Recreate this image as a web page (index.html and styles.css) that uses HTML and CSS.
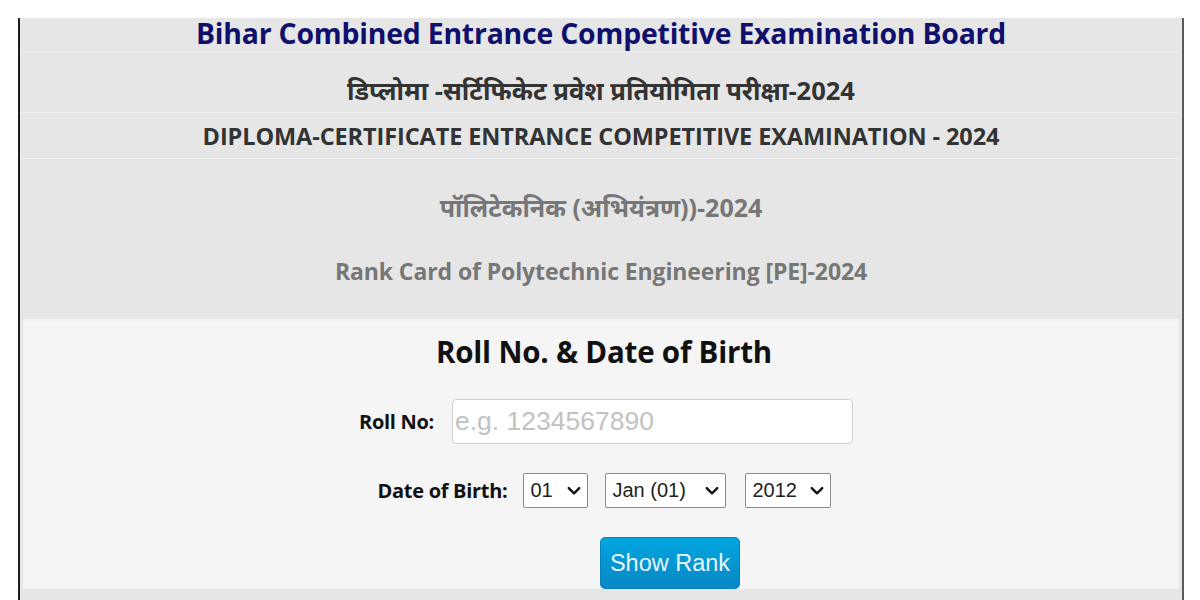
FILE: index.html
```html
<!DOCTYPE html>
<html lang="en">
<head>
<meta charset="utf-8">
<title>BCECEB - Rank Card of Polytechnic Engineering [PE]-2024</title>
<link rel="stylesheet" href="styles.css">
</head>
<body>
<div class="page">
  <div class="board">
    <div class="row row-title"><h1 class="board-name">Bihar Combined Entrance Competitive Examination Board</h1></div>
    <div class="row row-hindi"><h2 class="exam-hi">डिप्लोमा -सर्टिफिकेट प्रवेश प्रतियोगिता परीक्षा-2024</h2></div>
    <div class="row row-en"><h2 class="exam-en">DIPLOMA-CERTIFICATE ENTRANCE COMPETITIVE EXAMINATION - 2024</h2></div>
    <div class="row row-sub">
      <h3 class="sub-hi">पॉलिटेकनिक (अभियंत्रण))-2024</h3>
      <h3 class="sub-en">Rank Card of Polytechnic Engineering [PE]-2024</h3>
    </div>
    <form class="panel">
      <h2 class="panel-title">Roll No. &amp; Date of Birth</h2>
      <div class="field field-roll">
        <label class="label" for="roll">Roll No:</label>
        <input class="input" id="roll" type="text" placeholder="e.g. 1234567890">
      </div>
      <div class="field field-dob">
        <label class="label" for="day">Date of Birth:</label>
        <div class="select sel-day"><span>01</span><svg viewBox="0 0 12 8" class="chev"><path d="M1.5 1.5 L6 6 L10.5 1.5" /></svg></div>
        <div class="select sel-month"><span>Jan (01)</span><svg viewBox="0 0 12 8" class="chev"><path d="M1.5 1.5 L6 6 L10.5 1.5" /></svg></div>
        <div class="select sel-year"><span>2012</span><svg viewBox="0 0 12 8" class="chev"><path d="M1.5 1.5 L6 6 L10.5 1.5" /></svg></div>
      </div>
      <div class="actions">
        <button class="btn" type="button">Show Rank</button>
      </div>
    </form>
    <div class="foot"></div>
  </div>
</div>
</body>
</html>
```

FILE: styles.css
```css
html, body {
  margin: 0;
  padding: 0;
  background: #ffffff;
}
body {
  font-family: "Open Sans", "Noto Sans", "Noto Sans Devanagari", sans-serif;
}
.page {
  padding: 18px 0 0 18px;
}
.board {
  width: 1162px;
  border-left: 2px solid #1e1e1e;
  border-right: 2px solid #5a5a5a;
  background: #e6e6e6;
  display: flex;
  flex-direction: column;
}
.row {
  display: flex;
  flex-direction: column;
  align-items: center;
  justify-content: center;
  border-bottom: 1px solid #f0f0f0;
}
.row h1, .row h2, .row h3 {
  margin: 0;
  font-weight: 700;
  white-space: nowrap;
}
.row-title {
  height: 33px;
  justify-content: flex-start;
}
.board-name {
  font-size: 28.4px;
  line-height: 31px;
  color: #0f0f6c;
  letter-spacing: -0.2px;
}
.row-hindi {
  height: 60px;
}
.exam-hi {
  font-size: 25.5px;
  line-height: 30px;
  color: #333333;
  padding-top: 16px;
}
.row-en {
  height: 45px;
}
.exam-en {
  font-size: 23.5px;
  line-height: 28px;
  color: #333333;
  letter-spacing: -0.1px;
}
.row-sub {
  height: 160px;
  border-bottom: none;
  justify-content: flex-start;
}
.sub-hi {
  font-size: 25px;
  line-height: 30px;
  color: #777777;
  margin-top: 33px !important;
}
.sub-en {
  font-size: 23px;
  line-height: 28px;
  color: #777777;
  margin-top: 35px !important;
  letter-spacing: -0.1px;
}
.panel {
  margin: 0 3px;
  background: #f5f5f5;
  border-top: 2px solid #f2f2f2;
  height: 270px;
  display: flex;
  flex-direction: column;
  align-items: center;
  box-sizing: border-box;
}
.panel-title {
  margin: 13px 0 0 6px;
  font-size: 29.5px;
  line-height: 36px;
  font-weight: 700;
  color: #111111;
  letter-spacing: -0.2px;
}
.field {
  display: flex;
  align-items: center;
}
.field-roll {
  margin-top: 29px;
  margin-left: 10px;
}
.label {
  font-size: 20px;
  font-weight: 700;
  color: #111111;
  letter-spacing: -0.3px;
}
.field-roll .label {
  margin-right: 18px;
}
.input {
  width: 401px;
  height: 45px;
  box-sizing: border-box;
  border: 1px solid #cfcfcf;
  border-radius: 4px;
  background: #ffffff;
  font-family: "Liberation Sans", Arial, sans-serif;
  font-size: 26.5px;
  padding: 0 2px;
  color: #333;
}
.input::placeholder {
  color: #c2c2c2;
}
.field-dob {
  margin-top: 29px;
  margin-left: 7px;
}
.field-dob .label {
  margin-right: 16px;
}
.select {
  height: 35px;
  box-sizing: border-box;
  border: 1px solid #8a8a8a;
  border-radius: 2px;
  background: #ffffff;
  display: flex;
  align-items: center;
  justify-content: space-between;
  padding: 0 6px 0 6px;
  font-family: "Liberation Sans", Arial, sans-serif;
  font-size: 20px;
  color: #222222;
}
.sel-day { width: 65px; margin-right: 17px; }
.sel-month { width: 121px; margin-right: 19px; }
.sel-year { width: 86px; }
.chev {
  width: 14px;
  height: 10px;
  fill: none;
  stroke: #111;
  stroke-width: 2;
  stroke-linecap: round;
  stroke-linejoin: round;
}
.actions {
  margin-top: 29px;
  margin-left: 138px;
}
.btn {
  width: 140px;
  height: 52px;
  border: 1px solid #0a7fb8;
  border-radius: 5px;
  background: linear-gradient(#00a6e0, #0a87c4);
  color: #e8f6ff;
  font-family: "Liberation Sans", Arial, sans-serif;
  font-size: 23.5px;
  padding: 0;
}
.foot {
  height: 12px;
  background: #e6e6e6;
}
```
